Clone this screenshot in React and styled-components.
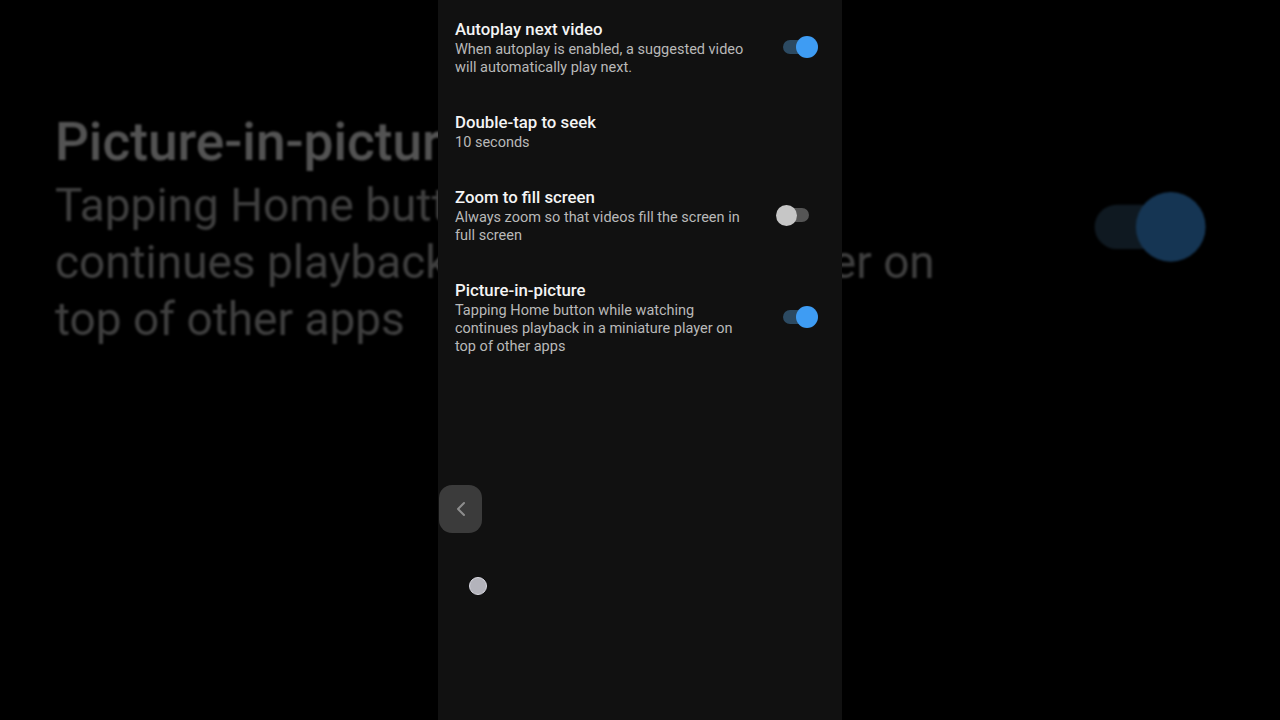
import React from "react";
import styled, { createGlobalStyle } from "styled-components";

const GlobalStyle = createGlobalStyle`
  html, body {
    margin: 0;
    padding: 0;
    background: #000;
  }
  body {
    font-family: Roboto, "Noto Sans", "Liberation Sans", sans-serif;
    -webkit-font-smoothing: antialiased;
  }
`;

const settings = [
  {
    title: "Autoplay next video",
    desc: "When autoplay is enabled, a suggested video will automatically play next.",
    toggle: true,
  },
  { title: "Double-tap to seek", desc: "10 seconds" },
  {
    title: "Zoom to fill screen",
    desc: "Always zoom so that videos fill the screen in full screen",
    toggle: false,
  },
  {
    title: "Picture-in-picture",
    desc: "Tapping Home button while watching continues playback in a miniature player on top of other apps",
    toggle: true,
  },
];

const Page = styled.div`
  position: relative;
  width: 1280px;
  height: 720px;
  overflow: hidden;
  background: #000;
  display: flex;
  justify-content: center;
`;

const Backdrop = styled.div`
  position: absolute;
  inset: 0;
  pointer-events: none;
  overflow: hidden;
`;

const Magnified = styled.div`
  position: absolute;
  left: 1px;
  top: -778px;
  width: 404px;
  transform: scale(3.17);
  transform-origin: 0 0;
  filter: brightness(0.34) blur(0.35px);
`;

const Phone = styled.div`
  position: relative;
  width: 404px;
  height: 720px;
  background: #111111;
  flex-shrink: 0;
`;

const List = styled.div`
  display: flex;
  flex-direction: column;
`;

const Row = styled.div`
  display: flex;
  align-items: center;
  padding: 17px 24px 16px 17px;
  gap: 16px;
`;

const Texts = styled.div`
  flex: 1;
  display: flex;
  flex-direction: column;
  max-width: 296px;
`;

const Title = styled.div`
  color: #f4f4f4;
  font-size: 16.8px;
  font-weight: 500;
  line-height: 24px;
`;

const Desc = styled.div`
  color: #b9b9b9;
  font-size: 14.5px;
  line-height: 18px;
`;

const Switch = styled.div`
  position: relative;
  width: 42px;
  height: 22px;
  flex-shrink: 0;
  margin-left: auto;
`;

const Track = styled.div`
  position: absolute;
  top: 4px;
  height: 14px;
  border-radius: 7px;
  left: ${(p) => (p.$on ? "7px" : "4px")};
  width: ${(p) => (p.$on ? "28px" : "29px")};
  background: ${(p) => (p.$on ? "#2c4a62" : "#555555")};
`;

const Knob = styled.div`
  position: absolute;
  top: ${(p) => (p.$on ? "0" : "0.5px")};
  width: ${(p) => (p.$on ? "22px" : "21px")};
  height: ${(p) => (p.$on ? "22px" : "21px")};
  border-radius: 50%;
  left: ${(p) => (p.$on ? "20px" : "0")};
  background: ${(p) => (p.$on ? "#3e9cf3" : "#c6c6c6")};
`;

const EdgeHandle = styled.div`
  position: absolute;
  left: 1px;
  top: 485px;
  width: 43px;
  height: 48px;
  border-radius: 13px;
  background: #3b3b3b;
  display: flex;
  align-items: center;
  justify-content: center;
`;

const TouchDot = styled.div`
  position: absolute;
  left: 31px;
  top: 577px;
  width: 16px;
  height: 16px;
  border-radius: 50%;
  background: #b3b3bb;
  border: 1.5px solid #d9d9e2;
`;

const Toggle = ({ on }) => (
  <Switch>
    <Track $on={on} />
    <Knob $on={on} />
  </Switch>
);

const SettingsList = () => (
  <List>
    {settings.map((s) => (
      <Row key={s.title}>
        <Texts>
          <Title>{s.title}</Title>
          <Desc>{s.desc}</Desc>
        </Texts>
        {s.toggle !== undefined && <Toggle on={s.toggle} />}
      </Row>
    ))}
  </List>
);

export default function App() {
  return (
    <>
      <GlobalStyle />
      <Page>
        <Backdrop>
          <Magnified>
            <SettingsList />
          </Magnified>
        </Backdrop>
        <Phone>
          <SettingsList />
          <EdgeHandle>
            <svg width="14" height="16" viewBox="0 0 14 16">
              <polyline
                points="10,2 4,8 10,14"
                fill="none"
                stroke="#8d8d8d"
                strokeWidth="2"
                strokeLinecap="round"
                strokeLinejoin="round"
              />
            </svg>
          </EdgeHandle>
          <TouchDot />
        </Phone>
      </Page>
    </>
  );
}
